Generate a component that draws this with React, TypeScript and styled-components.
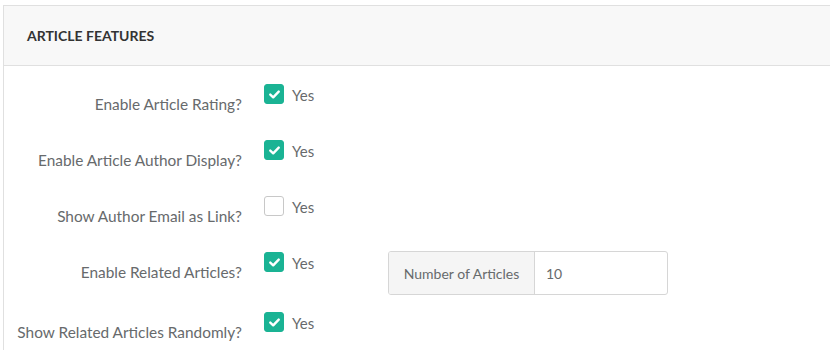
import * as React from 'react';
import styled, { createGlobalStyle } from 'styled-components';

const GlobalStyle = createGlobalStyle`
  html, body {
    margin: 0;
    padding: 0;
    background: #ffffff;
    overflow: hidden;
  }
  body {
    font-family: Lato, "Open Sans", "Liberation Sans", sans-serif;
    color: #676a6c;
  }
`;

const Page = styled.div`
  padding: 5px 0 0 3px;
`;

const Panel = styled.section`
  border-top: 1px solid #e0e0e0;
  border-left: 1px solid #e0e0e0;
  margin-right: -20px;
  background: #fff;
`;

const PanelHeader = styled.header`
  height: 59px;
  display: flex;
  align-items: center;
  padding-left: 23px;
  background: #f8f8f8;
  border-bottom: 1px solid #e0e0e0;
`;

const Title = styled.h5`
  margin: 0;
  font-size: 14px;
  font-weight: 700;
  color: #333;
`;

const PanelBody = styled.div`
  padding-top: 18px;
  display: flex;
  flex-direction: column;
  gap: 18px;
`;

const Row = styled.div`
  display: grid;
  grid-template-columns: 238px 1fr;
  column-gap: 22px;
  min-height: 38px;
`;

const Label = styled.label`
  text-align: right;
  font-size: 15.4px;
  line-height: 20px;
  padding-top: 10px;
  color: #676a6c;
`;

const Controls = styled.div`
  display: flex;
  align-items: flex-start;
`;

const CheckGroup = styled.div`
  display: flex;
  align-items: flex-start;
  gap: 8px;
  width: 124px;
`;

const Box = styled.span<{ $checked: boolean }>`
  width: 20px;
  height: 20px;
  box-sizing: border-box;
  border-radius: 3px;
  display: flex;
  align-items: center;
  justify-content: center;
  background: ${(p) => (p.$checked ? '#1ab394' : '#fff')};
  border: 1px solid ${(p) => (p.$checked ? '#1ab394' : '#c8c8c8')};
`;

const Yes = styled.span`
  font-size: 15px;
  line-height: 20px;
  margin-top: 1px;
`;

const InputGroup = styled.div`
  display: flex;
  width: 280px;
  height: 44px;
  margin: -1px 0;
  box-sizing: border-box;
  border: 1px solid #d6d6d6;
  border-radius: 3px;
  overflow: hidden;
  font-size: 14px;
`;

const Addon = styled.span`
  width: 145px;
  display: flex;
  align-items: center;
  justify-content: center;
  background: #f5f5f5;
  border-right: 1px solid #d6d6d6;
  color: #676a6c;
`;

const Field = styled.span`
  flex: 1;
  display: flex;
  align-items: center;
  padding-left: 11px;
  color: #676a6c;
`;

const Check = ({ checked }: { checked: boolean }) => (
  <Box $checked={checked}>
    {checked && (
      <svg width="11" height="9" viewBox="0 0 11 9">
        <path d="M1.3 4.6 L4.2 7.3 L9.7 1.6" fill="none" stroke="#fff" strokeWidth="2.4" strokeLinecap="round" strokeLinejoin="round" />
      </svg>
    )}
  </Box>
);

const rows = [
  { label: 'Enable Article Rating?', checked: true },
  { label: 'Enable Article Author Display?', checked: true },
  { label: 'Show Author Email as Link?', checked: false },
  { label: 'Enable Related Articles?', checked: true, count: '10' },
  { label: 'Show Related Articles Randomly?', checked: true },
];

export default function App() {
  return (
    <Page>
      <GlobalStyle />
      <Panel>
        <PanelHeader>
          <Title>ARTICLE FEATURES</Title>
        </PanelHeader>
        <PanelBody>
          {rows.map((r) => (
            <Row key={r.label}>
              <Label>{r.label}</Label>
              <Controls>
                <CheckGroup>
                  <Check checked={r.checked} />
                  <Yes>Yes</Yes>
                </CheckGroup>
                {r.count && (
                  <InputGroup>
                    <Addon>Number of Articles</Addon>
                    <Field>{r.count}</Field>
                  </InputGroup>
                )}
              </Controls>
            </Row>
          ))}
        </PanelBody>
      </Panel>
    </Page>
  );
}
